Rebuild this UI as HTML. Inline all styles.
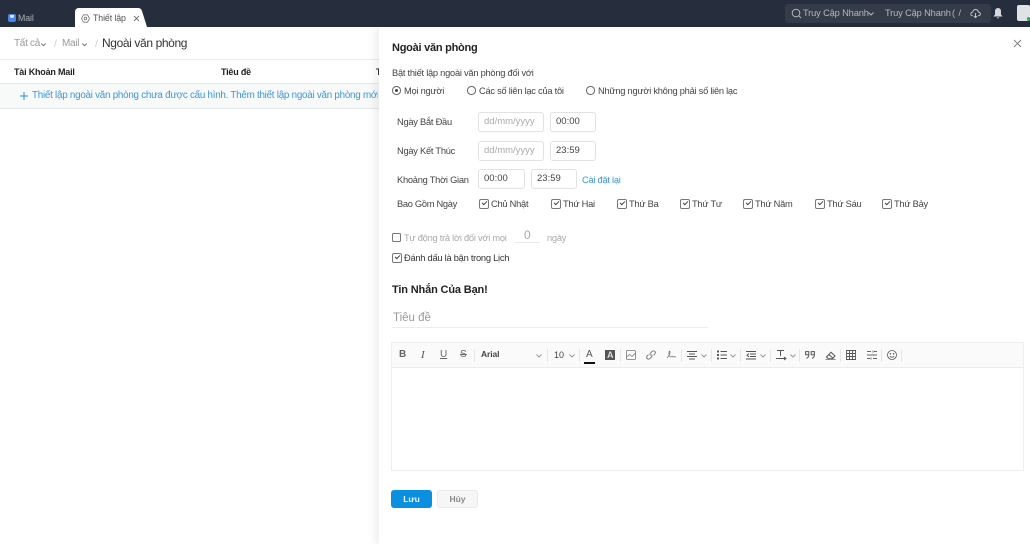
<!DOCTYPE html>
<html lang="vi"><head><meta charset="utf-8"><style>
html,body{margin:0;padding:0;background:#fff}
#p{position:relative;width:1030px;height:544px;overflow:hidden;background:#fff;font-family:"Liberation Sans",sans-serif;filter:blur(.3px)}
#p div{position:absolute;white-space:nowrap}
.t{position:absolute;white-space:nowrap;font-size:9.3px;letter-spacing:-.25px;line-height:14px;color:#444}
.in{border:1px solid #e2e2e2;border-radius:3px;height:20px;line-height:18px;box-sizing:border-box;font-size:9.5px;color:#444;padding-left:5px;background:#fff}
.ph{color:#aaa}
svg{position:absolute;overflow:visible}
.cb{width:8px;height:8px;border:1px solid #777;border-radius:2px}
.cb:after{content:"";position:absolute;left:1.5px;top:1px;width:4px;height:2px;border-left:1px solid #444;border-bottom:1px solid #444;transform:rotate(-45deg)}
.r{width:6.5px;height:6.5px;border:1px solid #666;border-radius:50%}
.sep{width:1px;height:13px;top:349px;background:#e6e6e6}
.b{font-weight:bold;color:#222}
</style></head><body><div id="p">
<div style="left:0;top:0;width:1030px;height:27px;background:#262e3d"></div>
<div style="left:8px;top:14px;width:8px;height:8px;background:#4a86e8;border-radius:2px"></div>
<div style="left:10px;top:15px;width:4px;height:3px;background:#dfe8fa;border-radius:0 0 2px 2px"></div>
<div class="t" style="left:18px;top:11px;color:#a9aeb6;font-size:8.8px;letter-spacing:-.1px">Mail</div>
<div style="left:75px;top:8px;width:72px;height:19px;background:#fff;clip-path:polygon(0 100%,0 3px,1px 1px,3px 0,64px 0,66px 1px,67px 3px,72px 100%)"></div>
<svg style="left:81px;top:14px" width="9" height="9" viewBox="0 0 9 9" fill="none" stroke="#777" stroke-width=".8"><path d="M2.5.8H6.5L8.5 4.5L6.5 8.2H2.5L.5 4.5Z"/><circle cx="4.5" cy="4.5" r="1.3"/></svg>
<div class="t" style="left:93px;top:11px;font-size:8.8px;letter-spacing:-.1px;color:#555">Thiết lập</div>
<svg style="left:134px;top:16px" width="5" height="5" viewBox="0 0 6 6" stroke="#555" stroke-width="1"><path d="M0 0L6 6M6 0L0 6"/></svg>

<div style="left:785px;top:4px;width:206px;height:19px;background:#343c4a;border-radius:3px"></div>
<svg style="left:791px;top:8px" width="11" height="11" viewBox="0 0 11 11" fill="none" stroke="#b4b8be" stroke-width="1"><circle cx="5" cy="5" r="3.8"/><path d="M8 8L10 10"/></svg>
<div class="t" style="left:803px;top:6px;color:#b4b8be;font-size:9.3px;letter-spacing:-.15px">Truy Cập Nhanh</div>
<svg style="left:868px;top:12px" width="6" height="4" fill="none" stroke="#b4b8be"><path d="M.5.5L3 3L5.5.5"/></svg>
<div class="t" style="left:885px;top:6px;color:#b4b8be;font-size:9.3px;letter-spacing:-.15px">Truy Cập Nhanh</div>
<div class="t" style="left:952px;top:6px;color:#b4b8be;font-size:9.3px;letter-spacing:.4px">( /</div>
<svg style="left:970px;top:7px" width="11" height="12" viewBox="0 0 12 12" fill="none" stroke="#ccd" stroke-width="1"><path d="M3 9C1 9 .5 7.5 1 6.3C1.5 5.3 2.5 5 3 5C3.3 3 5 2 6.3 2.2C8 2.4 9 3.6 9 5C10.5 5 11.5 6 11.3 7.3C11.1 8.4 10.3 9 9 9M6 6V11M4.3 9.3L6 11L7.7 9.3"/></svg>
<svg style="left:993px;top:8px" width="10" height="11" viewBox="0 0 10 11" fill="#d4d7dc"><path d="M5 0C7 0 8 1.5 8 3.5V6.5L9.5 8.5H.5L2 6.5V3.5C2 1.5 3 0 5 0ZM3.8 9.3H6.2L5 10.8Z"/></svg>
<div style="left:1017px;top:5px;width:13px;height:16px;background:#dfe3e6;border-radius:2px"></div>
<div style="left:1027px;top:17px;width:3px;height:4px;background:#2fae5b;border-radius:2px"></div>

<div class="t" style="left:14px;top:37px;font-size:10px;letter-spacing:-.3px;color:#999">Tất cả</div>
<svg style="left:41px;top:43px" width="5" height="4" fill="none" stroke="#777"><path d="M.3.5L2.5 2.7L4.7.5"/></svg>
<div class="t" style="left:54px;top:37px;font-size:10.5px;color:#ccc">/</div>
<div class="t" style="left:62px;top:37px;font-size:10px;letter-spacing:-.3px;color:#999">Mail</div>
<svg style="left:82px;top:43px" width="5" height="4" fill="none" stroke="#777"><path d="M.3.5L2.5 2.7L4.7.5"/></svg>
<div class="t" style="left:95px;top:37px;font-size:10.5px;color:#ccc">/</div>
<div class="t" style="left:102px;top:36px;font-size:12px;letter-spacing:-.38px;color:#333">Ngoài văn phòng</div>
<div style="left:0;top:59px;width:380px;height:1px;background:#ececec"></div>
<div class="t b" style="left:14px;top:65px;font-size:9px;letter-spacing:-.2px">Tài Khoản Mail</div>
<div class="t b" style="left:221px;top:65px;font-size:9px;letter-spacing:-.2px">Tiêu đề</div>
<div class="t" style="left:376px;top:65px;font-size:9px;font-weight:bold;color:#222">T</div>
<div style="left:0;top:83px;width:380px;height:26px;background:#f8f9f9;border-top:1px solid #e8e8e8;border-bottom:1px solid #e8e8e8;box-sizing:border-box"></div>
<svg style="left:20px;top:92px" width="8" height="8" stroke="#2c8bd6" stroke-width="1"><path d="M4 0V8M0 4H8"/></svg>
<div class="t" style="left:32px;top:89px;font-size:9.8px;letter-spacing:-.24px;color:#3a97dc;width:346px;overflow:hidden">Thiết lập ngoài văn phòng chưa được cấu hình. Thêm thiết lập ngoài văn phòng mới</div>

<div style="left:379px;top:27px;width:651px;height:517px;background:#fff;box-shadow:-4px 0 8px rgba(0,0,0,.07)"></div>
<div class="t b" style="left:392px;top:41px;font-size:11px;letter-spacing:-.25px">Ngoài văn phòng</div>
<svg style="left:1014px;top:40px" width="7" height="7" stroke="#777" stroke-width=".9"><path d="M0 0L7 7M7 0L0 7"/></svg>
<div class="t" style="left:392px;top:66px">Bật thiết lập ngoài văn phòng đối với</div>
<div class="r" style="left:392px;top:86px"></div><div style="left:394.5px;top:88.5px;width:3.5px;height:3.5px;background:#444;border-radius:50%"></div>
<div class="t" style="left:404px;top:84px">Mọi người</div>
<div class="r" style="left:467px;top:86px"></div>
<div class="t" style="left:479px;top:84px">Các số liên lạc của tôi</div>
<div class="r" style="left:586px;top:86px"></div>
<div class="t" style="left:598px;top:84px">Những người không phải số liên lạc</div>

<div class="t" style="left:397px;top:115px">Ngày Bắt Đầu</div>
<div class="in ph" style="left:478px;top:112px;width:66px">dd/mm/yyyy</div>
<div class="in" style="left:550px;top:112px;width:46px">00:00</div>
<div class="t" style="left:397px;top:144px">Ngày Kết Thúc</div>
<div class="in ph" style="left:478px;top:141px;width:66px">dd/mm/yyyy</div>
<div class="in" style="left:550px;top:141px;width:46px">23:59</div>
<div class="t" style="left:397px;top:173px">Khoảng Thời Gian</div>
<div class="in" style="left:478px;top:169px;width:47px">00:00</div>
<div class="in" style="left:531px;top:169px;width:46px">23:59</div>
<div class="t" style="left:582px;top:173px;color:#3a97dc">Cài đặt lại</div>

<div class="t" style="left:397px;top:197px;letter-spacing:-.3px">Bao Gồm Ngày</div>
<div class="cb" style="left:479px;top:199px"></div><div class="t" style="left:491px;top:197px">Chủ Nhật</div>
<div class="cb" style="left:551px;top:199px"></div><div class="t" style="left:563px;top:197px">Thứ Hai</div>
<div class="cb" style="left:617px;top:199px"></div><div class="t" style="left:629px;top:197px">Thứ Ba</div>
<div class="cb" style="left:680px;top:199px"></div><div class="t" style="left:692px;top:197px">Thứ Tư</div>
<div class="cb" style="left:743px;top:199px"></div><div class="t" style="left:755px;top:197px">Thứ Năm</div>
<div class="cb" style="left:815px;top:199px"></div><div class="t" style="left:827px;top:197px">Thứ Sáu</div>
<div class="cb" style="left:882px;top:199px"></div><div class="t" style="left:894px;top:197px">Thứ Bảy</div>

<div style="left:392px;top:233px;width:7px;height:7px;border:1px solid #777;border-radius:1.5px"></div>
<div class="t" style="left:404px;top:231px;color:#aaa">Tự động trả lời đối với mọi</div>
<div class="t" style="left:524px;top:228px;font-size:12px;color:#aaa">0</div>
<div style="left:515px;top:242px;width:25px;height:1px;background:#e8e8e8"></div>
<div class="t" style="left:547px;top:231px;color:#aaa">ngày</div>
<div class="cb" style="left:392px;top:253px"></div>
<div class="t" style="left:404px;top:251px;color:#333">Đánh dấu là bận trong Lịch</div>
<div class="t b" style="left:392px;top:283px;font-size:11px;letter-spacing:-.15px">Tin Nhắn Của Bạn!</div>
<div class="t" style="left:393px;top:311px;font-size:11.5px;letter-spacing:0;color:#999">Tiêu đề</div>
<div style="left:392px;top:327px;width:316px;height:1px;background:#ececec"></div>

<div style="left:391px;top:342px;width:633px;height:129px;border:1px solid #eee;box-sizing:border-box"></div>
<div style="left:392px;top:343px;width:631px;height:24px;background:#fafafa;border-bottom:1px solid #ececec"></div>
<div class="t" style="left:399px;top:348px;font-weight:bold;color:#666;font-size:10px;letter-spacing:0">B</div>
<div class="t" style="left:421px;top:348px;font-style:italic;font-family:'Liberation Serif',serif;color:#555;font-size:11px;letter-spacing:0">I</div>
<div class="t" style="left:440px;top:348px;color:#666;font-size:10px;letter-spacing:0;text-decoration:underline">U</div>
<div class="t" style="left:460px;top:348px;color:#666;font-size:10px;letter-spacing:0;text-decoration:line-through">S</div>
<div class="sep" style="left:474px"></div>
<div class="t" style="left:481px;top:347px;font-size:8.5px;letter-spacing:-.1px;font-weight:bold;color:#444">Arial</div>
<svg style="left:536px;top:354px" width="6" height="4" fill="none" stroke="#999"><path d="M.5.5L3 3L5.5.5"/></svg>
<div class="sep" style="left:547px"></div>
<div class="t" style="left:554px;top:348px;font-size:9px;letter-spacing:0;color:#444">10</div>
<svg style="left:569px;top:354px" width="6" height="4" fill="none" stroke="#999"><path d="M.5.5L3 3L5.5.5"/></svg>
<div class="sep" style="left:579px"></div>
<div class="t" style="left:586px;top:348px;font-size:10px;letter-spacing:0;color:#555">A</div>
<div style="left:584px;top:362px;width:11px;height:2px;background:#111"></div>
<div style="left:605px;top:350px;width:10px;height:10px;background:#555"></div>
<div class="t" style="left:607px;top:348px;font-size:9px;letter-spacing:0;font-weight:bold;color:#ddd">A</div>
<div class="sep" style="left:620px"></div>
<svg style="left:626px;top:350px" width="10" height="10" viewBox="0 0 10 10" fill="none" stroke="#777" stroke-width=".8"><rect x=".5" y=".5" width="9" height="9" rx="1"/><path d="M.5 7L3.5 4.5L6 6.5L9.5 3"/></svg>
<svg style="left:646px;top:350px" width="10" height="10" viewBox="0 0 10 10" fill="none" stroke="#777" stroke-width=".9"><path d="M4.5 5.5C3.7 4.7 3.8 3.8 4.5 3L6 1.5C7 .6 8.2.7 9 1.5C9.6 2.4 9.4 3.4 8.7 4.2L7.6 5.3M5.5 4.5C6.3 5.3 6.2 6.2 5.5 7L4 8.5C3 9.4 1.8 9.3 1 8.5C.4 7.6.6 6.6 1.3 5.8L2.4 4.7"/></svg>
<svg style="left:666px;top:350px" width="11" height="10" viewBox="0 0 11 10" fill="none" stroke="#777" stroke-width=".8"><path d="M1 8C3 6 4.5 3 4 1.5C3.5.5 2.5 2 3 4.5C3.4 6.5 4.5 7.5 5.5 6.5C6 6 6.5 6 7 6.8H10"/></svg>
<div class="sep" style="left:681px"></div>
<svg style="left:687px;top:351px" width="10" height="9" stroke="#555" stroke-width="1"><path d="M0 .5H10M2 3H8M0 5.5H10M2 8H8"/></svg>
<svg style="left:701px;top:354px" width="6" height="4" fill="none" stroke="#999"><path d="M.5.5L3 3L5.5.5"/></svg>
<div class="sep" style="left:711px"></div>
<svg style="left:717px;top:351px" width="10" height="9" stroke="#555" stroke-width="1"><path d="M3.5 .5H10M3.5 4H10M3.5 7.5H10"/><path stroke-width="2" d="M0 .5H2M0 4H2M0 7.5H2"/></svg>
<svg style="left:730px;top:354px" width="6" height="4" fill="none" stroke="#999"><path d="M.5.5L3 3L5.5.5"/></svg>
<div class="sep" style="left:740px"></div>
<svg style="left:746px;top:351px" width="10" height="9" fill="none" stroke="#555" stroke-width="1"><path d="M0 .5H10M4 3H10M4 5.5H10M0 8H10M3 2.5L1 4.2L3 6"/></svg>
<svg style="left:760px;top:354px" width="6" height="4" fill="none" stroke="#999"><path d="M.5.5L3 3L5.5.5"/></svg>
<div class="sep" style="left:770px"></div>
<svg style="left:776px;top:350px" width="11" height="10" fill="none" stroke="#555" stroke-width="1"><path d="M1 .5H8M4.5.5V6M0 8.5H9M8 7L10 8.5L8 10"/></svg>
<svg style="left:790px;top:354px" width="6" height="4" fill="none" stroke="#999"><path d="M.5.5L3 3L5.5.5"/></svg>
<div class="sep" style="left:799px"></div>
<svg style="left:805px;top:351px" width="10" height="8" fill="none" stroke="#555" stroke-width="1"><path d="M.6.6H3.8V3.8H.6ZM3.8 3.8C3.8 5.5 3 6.8 1.5 7.4M6.2.6H9.4V3.8H6.2ZM9.4 3.8C9.4 5.5 8.6 6.8 7 7.4"/></svg>
<svg style="left:825px;top:351px" width="11" height="9" viewBox="0 0 11 9" fill="none" stroke="#555" stroke-width="1"><path d="M1.5 6L6 1.2L10 5L7.5 7.8H3.5ZM4 3.8L8 7" /><path d="M0.5 8.3H10.5" stroke-width=".7"/></svg>
<div class="sep" style="left:840px"></div>
<svg style="left:846px;top:350px" width="10" height="10" fill="none" stroke="#555" stroke-width=".9"><path d="M.5.5H9.5V9.5H.5ZM.5 3.5H9.5M.5 6.5H9.5M3.5.5V9.5M6.5.5V9.5"/></svg>
<svg style="left:867px;top:350px" width="10" height="10" fill="none" stroke="#666" stroke-width=".9"><path d="M0 1.5H4M0 5H10M6 8.5H10M6 .5V2.5M4 7.5V9.5M0 8.5H3M7 1.5H10"/></svg>
<div class="sep" style="left:881px"></div>
<svg style="left:887px;top:350px" width="10" height="10" fill="none" stroke="#555" stroke-width=".8"><circle cx="5" cy="5" r="4.5"/><circle cx="3.4" cy="3.8" r=".4"/><circle cx="6.6" cy="3.8" r=".4"/><path d="M2.8 6C3.5 7.6 6.5 7.6 7.2 6"/></svg>
<div class="sep" style="left:901px"></div>

<div style="left:391px;top:490px;width:41px;height:18px;background:#0b8fe0;border-radius:3px;color:#e8f4fc;font-size:8.5px;font-weight:bold;line-height:18px;text-align:center">Lưu</div>
<div style="left:437px;top:490px;width:41px;height:18px;background:#f6f6f6;border:1px solid #eaeaea;box-sizing:border-box;border-radius:3px;color:#888;font-size:8.5px;font-weight:bold;line-height:16px;text-align:center">Hủy</div>
</div></body></html>
